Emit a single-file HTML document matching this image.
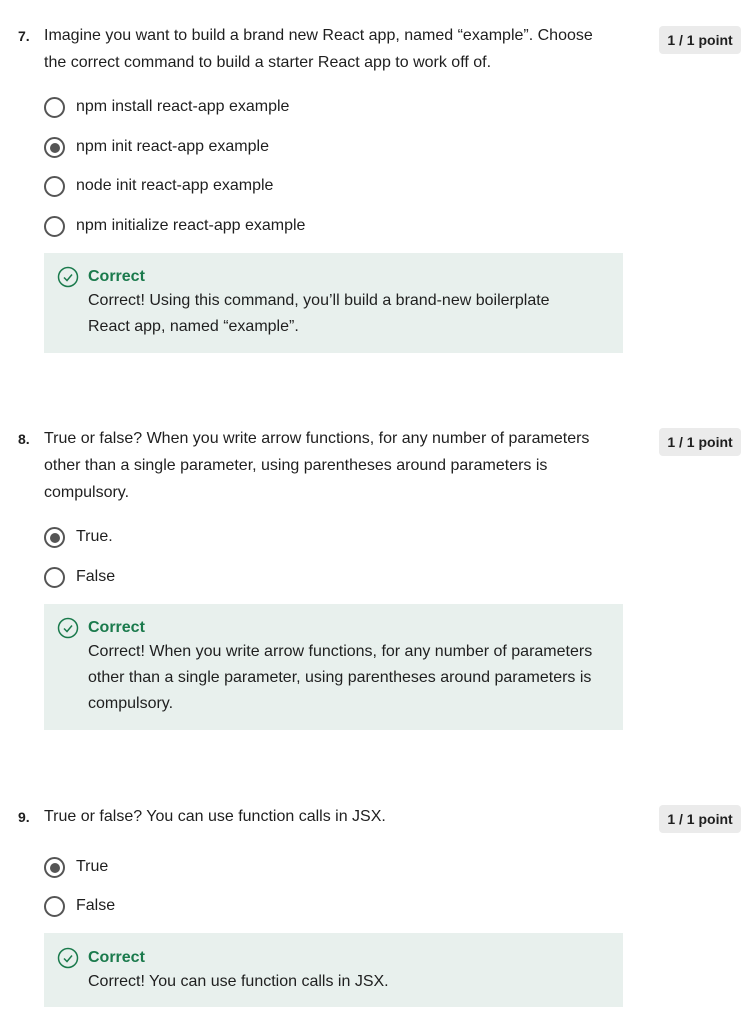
<!DOCTYPE html>
<html><head><meta charset="utf-8"><style>
body{margin:0;width:753px;height:1028px;background:#fff;font-family:"Liberation Sans",sans-serif;color:#1f1f1f;position:relative;overflow:hidden}
.a{position:absolute;white-space:nowrap;font-size:16px;line-height:20px}
.n{font-weight:bold;font-size:14px}
.badge{position:absolute;left:659px;width:82px;height:28px;background:#ebebeb;border-radius:4px;font-size:14px;font-weight:bold;line-height:28px;text-align:center;color:#1f1f1f}
.r{position:absolute;width:17px;height:17px;border:2px solid #555;border-radius:50%;box-sizing:content-box}
.r.s::after{content:"";position:absolute;left:3.5px;top:3.5px;width:10px;height:10px;border-radius:50%;background:#555}
.box{position:absolute;left:44px;width:579px;background:#e8f0ed}
.c{color:#1a7a4c;font-weight:bold}
svg{position:absolute}
</style></head><body>

<div class="a n" style="left:18px;top:26px">7.</div>
<div class="a" style="left:44px;top:26px">Imagine you want to build a brand new React app, named “example”. Choose</div>
<div class="a" style="left:44px;top:53px">the correct command to build a starter React app to work off of.</div>
<div class="badge" style="top:26px">1 / 1 point</div>
<div class="r" style="left:44px;top:97px"></div><div class="a" style="left:76px;top:97px">npm install react-app example</div>
<div class="r s" style="left:44px;top:137px"></div><div class="a" style="left:76px;top:137px">npm init react-app example</div>
<div class="r" style="left:44px;top:176px"></div><div class="a" style="left:76px;top:176px">node init react-app example</div>
<div class="r" style="left:44px;top:216px"></div><div class="a" style="left:76px;top:216px">npm initialize react-app example</div>
<div class="box" style="top:253px;height:100px"></div>
<svg style="left:57px;top:266px" width="22" height="22"><circle cx="11" cy="11" r="9.5" fill="none" stroke="#1a7a4c" stroke-width="1.5"/><path d="M7 11.5l3 3 5-6" fill="none" stroke="#1a7a4c" stroke-width="1.5"/></svg>
<div class="a c" style="left:88px;top:267px">Correct</div>
<div class="a" style="left:88px;top:291px">Correct! Using this command, you’ll build a brand-new boilerplate</div>
<div class="a" style="left:88px;top:317px">React app, named “example”.</div>

<div class="a n" style="left:18px;top:429px">8.</div>
<div class="a" style="left:44px;top:429px">True or false? When you write arrow functions, for any number of parameters</div>
<div class="a" style="left:44px;top:456px">other than a single parameter, using parentheses around parameters is</div>
<div class="a" style="left:44px;top:483px">compulsory.</div>
<div class="badge" style="top:428px">1 / 1 point</div>
<div class="r s" style="left:44px;top:527px"></div><div class="a" style="left:76px;top:527px">True.</div>
<div class="r" style="left:44px;top:567px"></div><div class="a" style="left:76px;top:567px">False</div>
<div class="box" style="top:604px;height:126px"></div>
<svg style="left:57px;top:617px" width="22" height="22"><circle cx="11" cy="11" r="9.5" fill="none" stroke="#1a7a4c" stroke-width="1.5"/><path d="M7 11.5l3 3 5-6" fill="none" stroke="#1a7a4c" stroke-width="1.5"/></svg>
<div class="a c" style="left:88px;top:618px">Correct</div>
<div class="a" style="left:88px;top:642px">Correct! When you write arrow functions, for any number of parameters</div>
<div class="a" style="left:88px;top:668px">other than a single parameter, using parentheses around parameters is</div>
<div class="a" style="left:88px;top:694px">compulsory.</div>

<div class="a n" style="left:18px;top:807px">9.</div>
<div class="a" style="left:44px;top:807px">True or false? You can use function calls in JSX.</div>
<div class="badge" style="top:805px">1 / 1 point</div>
<div class="r s" style="left:44px;top:857px"></div><div class="a" style="left:76px;top:857px">True</div>
<div class="r" style="left:44px;top:896px"></div><div class="a" style="left:76px;top:896px">False</div>
<div class="box" style="top:933px;height:74px"></div>
<svg style="left:57px;top:947px" width="22" height="22"><circle cx="11" cy="11" r="9.5" fill="none" stroke="#1a7a4c" stroke-width="1.5"/><path d="M7 11.5l3 3 5-6" fill="none" stroke="#1a7a4c" stroke-width="1.5"/></svg>
<div class="a c" style="left:88px;top:948px">Correct</div>
<div class="a" style="left:88px;top:972px">Correct! You can use function calls in JSX.</div>
</body></html>
